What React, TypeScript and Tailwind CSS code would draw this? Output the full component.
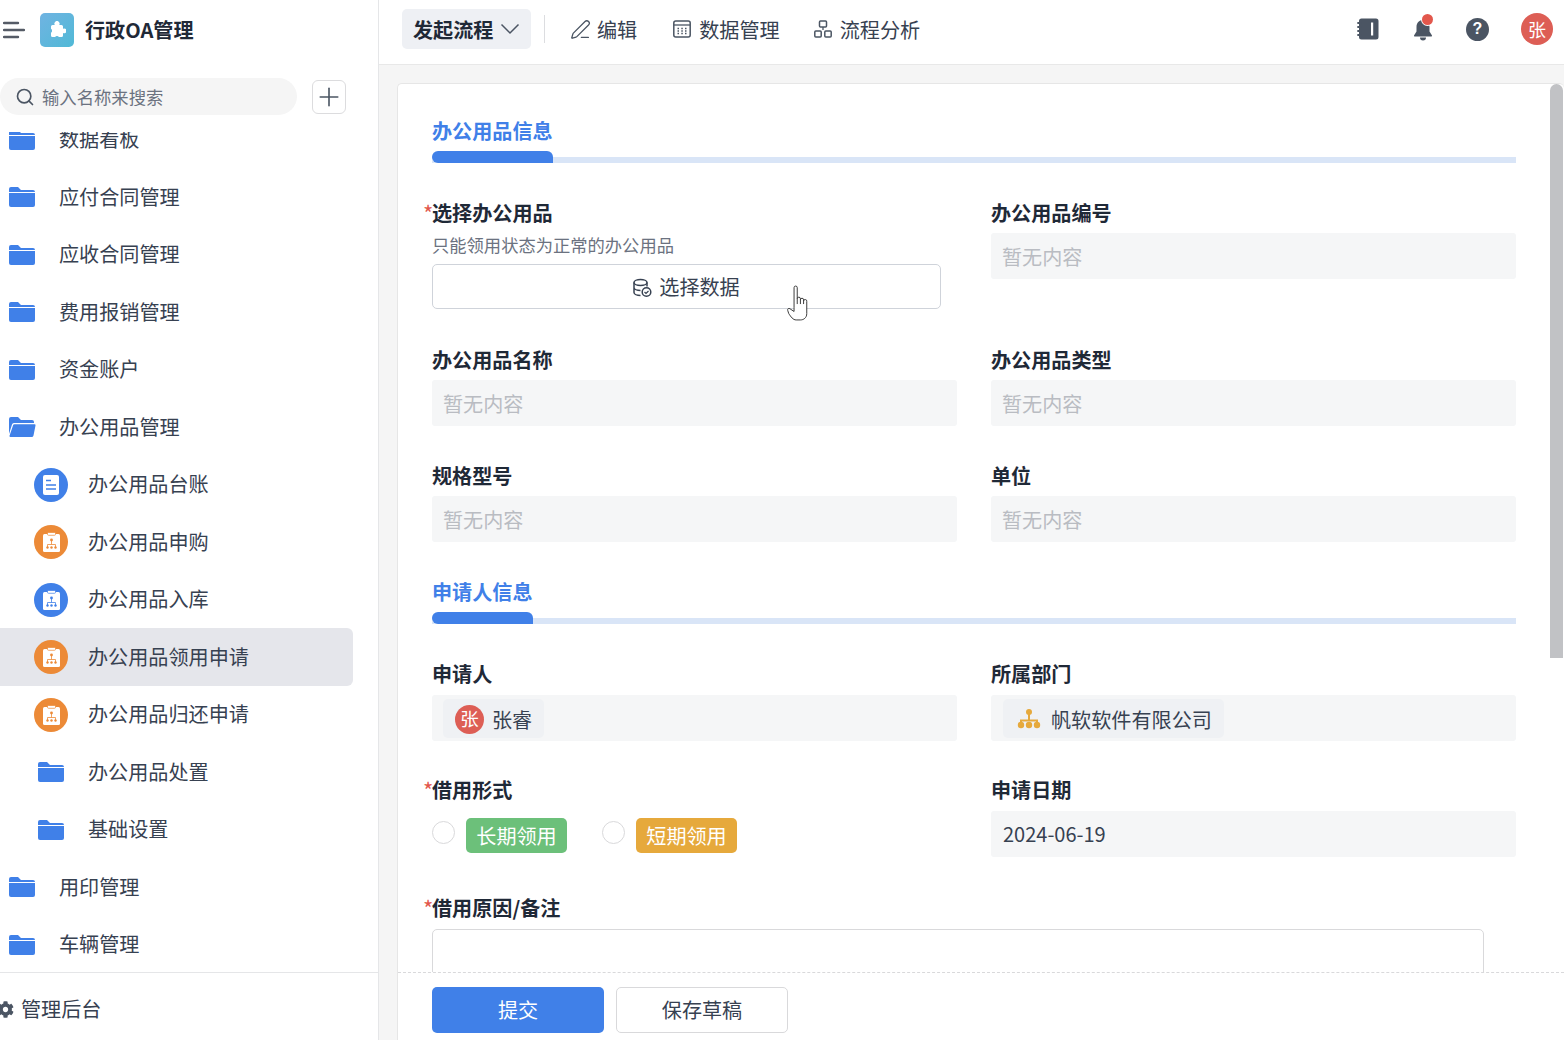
import React from 'react';
import { Search, Plus, PenLine } from 'lucide-react';
import { FaCog } from 'react-icons/fa';

function Folder({ open = false }: { open?: boolean }) {
  if (open) {
    return (
      <svg width="28" height="22" viewBox="0 0 28 22" className="shrink-0">
        <path d="M1 3a2 2 0 0 1 2-2h7l3 3h11a2 2 0 0 1 2 2v1H6a2 2 0 0 0-2 1.5L1 18z" fill="#4080e8" />
        <path d="M5 9.500A1.500 1.500 0 0 1 6.500 8.300h20A1 1 0 0 1 27.500 9.500L25.500 19.500a2 2 0 0 1-2 1.500H2.500a1 1 0 0 1-1-1.200z" fill="#4080e8" />
      </svg>
    );
  }
  return (
    <svg width="28" height="22" viewBox="0 0 28 22" className="shrink-0">
      <path d="M1 3a2 2 0 0 1 2-2h7l3 3h12a2 2 0 0 1 2 2H1z" fill="#4080e8" />
      <path d="M1 7h26v12a2 2 0 0 1-2 2H3a2 2 0 0 1-2-2z" fill="#4080e8" />
    </svg>
  );
}

function AppIcon({ color, doc = false }: { color: string; doc?: boolean }) {
  return (
    <span className="flex h-[34px] w-[34px] shrink-0 items-center justify-center rounded-full" style={{ backgroundColor: color }}>
      {doc ? (
        <svg width="16" height="20" viewBox="0 0 16 20">
          <rect x="0" y="0" width="16" height="20" rx="2" fill="#fff" />
          <path d="M3 5.500h5M3 10h10M3 14h10" stroke={color} strokeWidth="1.300" />
        </svg>
      ) : (
        <svg width="17" height="20" viewBox="0 0 17 20">
          <rect x="0" y="2" width="17" height="18" rx="1.500" fill="#fff" />
          <rect x="4.500" y="0.500" width="8" height="2.800" rx="1" fill="#fff" stroke={color} strokeWidth="0.700" />
          <circle cx="8.500" cy="8" r="1.400" fill={color} />
          <path d="M8.500 9v3.500M4.500 15v-2.500h8V15" stroke={color} strokeWidth="0.800" fill="none" />
          <circle cx="4.500" cy="15.500" r="1.200" fill={color} />
          <circle cx="8.500" cy="15.500" r="1.200" fill={color} />
          <circle cx="12.500" cy="15.500" r="1.200" fill={color} />
        </svg>
      )}
    </span>
  );
}

const BLUE = '#4080e8';
const ORANGE = '#ec8a37';

function TopRow({ label, open = false }: { label: string; open?: boolean }) {
  return (
    <div className="flex h-[57.5px] items-center pl-[8px]">
      <Folder open={open} />
      <span className="ml-[23px]">{label}</span>
    </div>
  );
}

function SubRow({ label, icon, active = false }: { label: string; icon: React.ReactNode; active?: boolean }) {
  return (
    <div className={`flex h-[57.5px] w-[353px] items-center rounded-r-md ${active ? 'bg-[#e5e6eb]' : ''}`}>
      <span className="ml-[34px] flex w-[34px] shrink-0 items-center justify-center">{icon}</span>
      <span className="ml-[20px]">{label}</span>
    </div>
  );
}

function Label({ text, required = false }: { text: string; required?: boolean }) {
  return (
    <div className="relative h-[28px] text-[20.12px] font-bold leading-[27px] text-[#1f2937]">
      {required && <span className="absolute left-[-9px] top-[-1px] text-[22px] font-normal leading-[28px] text-[#e2574c]">*</span>}
      {text}
    </div>
  );
}

function EmptyBox({ className = '' }: { className?: string }) {
  return (
    <div className={`flex h-[46px] items-center rounded-[3px] bg-[#f5f6f7] px-[11px] pt-[2px] text-[#b9bcc2] ${className}`}>暂无内容</div>
  );
}

function SectionTitle({ text, barWidth }: { text: string; barWidth: string }) {
  return (
    <div>
      <div className="h-[28px] font-bold leading-[27px] text-[#4080e8]">{text}</div>
      <div className="relative mt-[6px] flex h-[12px] items-end">
        <div className="h-[6px] w-full bg-[#d9e5f7]" />
        <div className={`absolute bottom-0 left-0 h-[12px] rounded-l-[10px] rounded-tr-[10px] bg-[#4080e8] ${barWidth}`} />
      </div>
    </div>
  );
}

export default function App() {
  return (
    <div className="flex h-screen w-full overflow-hidden bg-white text-[20.12px] text-[#374151] font-['Noto_Sans_CJK_SC','Noto_Sans',sans-serif]">
      <aside className="flex w-[379px] shrink-0 flex-col border-r border-[#e5e6e8] bg-white">
        <div className="flex h-[60px] shrink-0 items-center pl-[3px]">
          <svg width="22" height="18" viewBox="0 0 22 18" className="shrink-0">
            <path d="M1 2h14M1 9h20M1 16h14" stroke="#555b66" strokeWidth="2.400" strokeLinecap="round" />
          </svg>
          <span className="ml-[15px] flex h-[34px] w-[34px] items-center justify-center rounded-[5px] bg-gradient-to-br from-[#6fb3e2] to-[#4fb9d6]">
            <svg width="18" height="18" viewBox="0 0 18 18">
              <path d="M3 5.500a1.500 1.500 0 0 1 1.500-1.500h2.300a2.600 2.600 0 1 1 4.400 0h2.300a1.500 1.500 0 0 1 1.500 1.500v2.300a2.400 2.400 0 1 1 0 4.200v2.500a1.500 1.500 0 0 1-1.500 1.500h-2.600a2.300 2.300 0 0 0-3.800 0H4.500A1.500 1.500 0 0 1 3 14.500v-2.700a2.400 2.400 0 0 0 0-4z" fill="#fff" />
            </svg>
          </span>
          <span className="ml-[11px] font-bold text-[#1f2937]">行政OA管理</span>
        </div>
        <div className="mt-[18px] flex h-[37px] shrink-0 items-center">
          <div className="flex h-[37px] w-[297px] items-center rounded-full bg-[#f5f5f5] pl-[15px] text-[17.33px] text-[#6b7280]">
            <Search size={20} className="text-[#4b5563]" strokeWidth={2} />
            <span className="ml-[7px]">输入名称来搜索</span>
          </div>
          <button className="ml-[15px] flex h-[34px] w-[34px] items-center justify-center rounded-[6px] border-[1.500px] border-[#dcdcde] text-[#4b5563]">
            <Plus size={30} strokeWidth={1.300} />
          </button>
        </div>
        <div className="mt-[17px] min-h-0 flex-1 overflow-hidden">
          <div className="mt-[-21.250px]">
            <TopRow label="数据看板" />
            <TopRow label="应付合同管理" />
            <TopRow label="应收合同管理" />
            <TopRow label="费用报销管理" />
            <TopRow label="资金账户" />
            <TopRow label="办公用品管理" open />
            <SubRow label="办公用品台账" icon={<AppIcon color={BLUE} doc />} />
            <SubRow label="办公用品申购" icon={<AppIcon color={ORANGE} />} />
            <SubRow label="办公用品入库" icon={<AppIcon color={BLUE} />} />
            <SubRow label="办公用品领用申请" icon={<AppIcon color={ORANGE} />} active />
            <SubRow label="办公用品归还申请" icon={<AppIcon color={ORANGE} />} />
            <SubRow label="办公用品处置" icon={<Folder />} />
            <SubRow label="基础设置" icon={<Folder />} />
            <TopRow label="用印管理" />
            <TopRow label="车辆管理" />
          </div>
        </div>
        <div className="flex h-[68px] shrink-0 items-center border-t border-[#e5e6e8] pl-[21px] pt-[6px]">
          <span className="relative">
            <FaCog size={17} className="absolute left-[-24px] top-[7px] text-[#4b5563]" />
            管理后台
          </span>
        </div>
      </aside>

      <div className="flex min-w-0 flex-1 flex-col bg-[#f5f5f5]">
        <header className="flex h-[65px] shrink-0 items-center border-b border-[#e8e8e8] bg-white pb-[6px] pl-[23px] pr-[11px]">
          <div className="flex h-[40px] w-[129px] items-center rounded-[5px] bg-[#eef0f4] pl-[11px] font-bold text-[#1f2937]">
            <span className="pt-[2px]">发起流程</span>
            <svg width="20" height="12" viewBox="0 0 20 12" className="ml-[7px]">
              <path d="M1.500 1.500L10 10l8.500-8.500" fill="none" stroke="#4b5563" strokeWidth="1.500" />
            </svg>
          </div>
          <div className="ml-[13px] h-[28px] w-px bg-[#dcdde0]" />
          <div className="ml-[25px] flex items-center">
            <PenLine size={21} strokeWidth={1.500} className="text-[#4b5563]" />
            <span className="ml-[6px] pt-[2px]">编辑</span>
          </div>
          <div className="ml-[36px] flex items-center">
            <svg width="18" height="18" viewBox="0 0 18 18">
              <rect x="0.800" y="1" width="16.400" height="16" rx="2" fill="none" stroke="#4b5563" strokeWidth="1.500" />
              <path d="M1 5h16" stroke="#4b5563" strokeWidth="1.300" />
              <path d="M4.500 8.500h1.500M8.300 8.500h1.500M12 8.500h1.500M4.500 11h1.500M8.300 11h1.500M12 11h1.500M4.500 13.500h1.500M8.300 13.500h1.500M12 13.500h1.500" stroke="#4b5563" strokeWidth="1.500" />
            </svg>
            <span className="ml-[8px] pt-[2px]">数据管理</span>
          </div>
          <div className="ml-[34px] flex items-center">
            <svg width="18" height="18" viewBox="0 0 18 18">
              <rect x="5.500" y="1" width="7" height="6" rx="1" fill="none" stroke="#4b5563" strokeWidth="1.500" />
              <path d="M9 7v3" stroke="#4b5563" strokeWidth="1.300" />
              <rect x="0.800" y="11" width="6.400" height="6" rx="1" fill="none" stroke="#4b5563" strokeWidth="1.500" />
              <rect x="10.800" y="11" width="6.400" height="6" rx="1" fill="none" stroke="#4b5563" strokeWidth="1.500" />
            </svg>
            <span className="ml-[8px] pt-[2px]">流程分析</span>
          </div>
          <div className="ml-auto flex items-center">
            <svg width="22" height="22" viewBox="0 0 22 22">
              <path d="M2 3a2.500 2.500 0 0 1 2.500-2.500h14.500a2.500 2.500 0 0 1 2.500 2.500v16a2.500 2.500 0 0 1-2.500 2.500H4.500A2.500 2.500 0 0 1 2 19z" fill="#4b5563" />
              <rect x="14" y="4.500" width="2.200" height="13" fill="#fff" />
              <path d="M1 5h3M1 9h3M1 13h3M1 17h3" stroke="#4b5563" strokeWidth="1.800" strokeLinecap="round" />
            </svg>
            <span className="relative ml-[33px] flex h-[24px] w-[22px] items-center justify-center">
              <svg width="20" height="23" viewBox="0 0 20 23">
                <path d="M10 2c-4 0-6.500 3-6.500 7v4.500L1 17.500a.8.8 0 0 0 .7 1h16.600a.8.8 0 0 0 .7-1l-2.500-4V9c0-4-2.500-7-6.500-7z" fill="#4b5563" />
                <path d="M7 19.500a3 3 0 0 0 6 0z" fill="#4b5563" />
              </svg>
              <span className="absolute right-[1px] top-[-3px] h-[11px] w-[11px] rounded-full bg-[#e2574c] ring-1 ring-white" />
            </span>
            <span className="ml-[32px] flex h-[23px] w-[23px] items-center justify-center rounded-full bg-[#4b5563] text-[16px] font-bold leading-none text-white font-['Liberation_Sans',sans-serif]">?</span>
            <span className="ml-[32px] flex h-[32px] w-[32px] items-center justify-center rounded-full bg-[#dd5e55] text-[18px] text-white">张</span>
          </div>
        </header>

        <main className="min-h-0 flex-1 pl-[18px] pt-[18px]">
          <div className="relative flex h-full flex-col overflow-hidden rounded-t-[5px] border border-b-0 border-r-0 border-[#e6e6e6] bg-white">
            <div className="min-h-0 flex-1 overflow-hidden pl-[34px] pr-[48px] pt-[33px]">
              <SectionTitle text="办公用品信息" barWidth="w-[121px]" />

              <div className="mt-[36px] grid grid-cols-2 gap-x-[34px]">
                <div>
                  <Label text="选择办公用品" required />
                  <div className="mt-[6px] h-[25px] text-[17.3px] leading-[24px] text-[#6b7280]">只能领用状态为正常的办公用品</div>
                  <div className="mt-[6px] flex h-[45px] w-[509px] items-center justify-center rounded-[5px] border border-[#cfd3da] pr-[1px] pt-[2px]">
                    <svg width="20" height="20" viewBox="0 0 20 20" className="mr-[7px]">
                      <ellipse cx="8.500" cy="4.500" rx="6.500" ry="3" fill="none" stroke="#374151" strokeWidth="1.500" />
                      <path d="M2 4.500v10c0 1.700 3 3 6.500 3M2 9.500c0 1.700 3 3 6.500 3M15 4.500v4" fill="none" stroke="#374151" strokeWidth="1.500" />
                      <circle cx="14.500" cy="14" r="4.300" fill="#fff" stroke="#374151" strokeWidth="1.500" />
                      <path d="M12.500 14l1.500 1.500 2.500-2.500" fill="none" stroke="#374151" strokeWidth="1.200" />
                    </svg>
                    选择数据
                  </div>
                </div>
                <div>
                  <Label text="办公用品编号" />
                  <EmptyBox className="mt-[6px]" />
                </div>
              </div>

              <div className="mt-[37px] grid grid-cols-2 gap-x-[34px]">
                <div>
                  <Label text="办公用品名称" />
                  <EmptyBox className="mt-[6px]" />
                </div>
                <div>
                  <Label text="办公用品类型" />
                  <EmptyBox className="mt-[6px]" />
                </div>
              </div>

              <div className="mt-[36px] grid grid-cols-2 gap-x-[34px]">
                <div>
                  <Label text="规格型号" />
                  <EmptyBox className="mt-[6px]" />
                </div>
                <div>
                  <Label text="单位" />
                  <EmptyBox className="mt-[6px]" />
                </div>
              </div>

              <div className="mt-[36px]">
                <SectionTitle text="申请人信息" barWidth="w-[101px]" />
              </div>

              <div className="mt-[36px] grid grid-cols-2 gap-x-[34px]">
                <div>
                  <Label text="申请人" />
                  <div className="mt-[7px] flex h-[46px] items-center rounded-[3px] bg-[#f5f6f7] pl-[11px]">
                    <div className="flex h-[39px] w-[101px] items-center rounded-[5px] bg-[#eff1f4] pl-[12px] pt-[2px]">
                      <span className="flex h-[29px] w-[29px] items-center justify-center rounded-full bg-[#dd5e55] text-[18.5px] text-white">张</span>
                      <span className="ml-[8px] pt-[2px]">张睿</span>
                    </div>
                  </div>
                </div>
                <div>
                  <Label text="所属部门" />
                  <div className="mt-[7px] flex h-[46px] items-center rounded-[3px] bg-[#f5f6f7] pl-[12px]">
                    <div className="flex h-[39px] w-[221px] items-center rounded-[5px] bg-[#eff1f4] pl-[14px] pt-[2px]">
                      <svg width="24" height="22" viewBox="0 0 24 22">
                        <circle cx="12" cy="4" r="3" fill="#e6a93c" />
                        <path d="M12 6v6M4 17v-4.500h16V17" stroke="#e6a93c" strokeWidth="2" fill="none" />
                        <circle cx="4" cy="17" r="3.200" fill="#e6a93c" />
                        <circle cx="12" cy="17" r="3.200" fill="#e6a93c" />
                        <circle cx="20" cy="17" r="3.200" fill="#e6a93c" />
                      </svg>
                      <span className="ml-[10px] pt-[2px]">帆软软件有限公司</span>
                    </div>
                  </div>
                </div>
              </div>

              <div className="mt-[35px] grid grid-cols-2 gap-x-[34px]">
                <div>
                  <Label text="借用形式" required />
                  <div className="mt-[7px] flex h-[46px] items-center pt-[2px]">
                    <span className="mt-[-6px] h-[23px] w-[23px] rounded-full border border-[#d9d9db]" />
                    <span className="ml-[11px] flex h-[35px] w-[101px] items-center justify-center rounded-[5px] bg-[#6cc07a] pt-[2px] text-white">长期领用</span>
                    <span className="ml-[35px] mt-[-6px] h-[23px] w-[23px] rounded-full border border-[#d9d9db]" />
                    <span className="ml-[11px] flex h-[35px] w-[101px] items-center justify-center rounded-[5px] bg-[#e6a93c] pt-[2px] text-white">短期领用</span>
                  </div>
                </div>
                <div>
                  <Label text="申请日期" />
                  <div className="mt-[7px] flex h-[46px] items-center rounded-[3px] bg-[#f5f6f7] px-[12px] text-[20px]">2024-06-19</div>
                </div>
              </div>

              <div className="mt-[37px]">
                <Label text="借用原因/备注" required />
                <div className="mt-[7px] h-[120px] w-[1052px] rounded-[5px] border border-[#d9d9db]" />
              </div>
            </div>

            <div className="flex h-[68px] shrink-0 items-start gap-[12px] border-t border-dashed border-[#d9d9db] bg-white pl-[34px] pt-[14px]">
              <button className="flex h-[46px] w-[172px] items-center justify-center rounded-[5px] bg-[#4080e8] text-white">提交</button>
              <button className="flex h-[46px] w-[172px] items-center justify-center rounded-[5px] border border-[#d9d9db] bg-white">保存草稿</button>
            </div>

            <div className="absolute right-[1px] top-0 h-[574px] w-[13px] rounded-t-full rounded-b-[3px] bg-[#c1c2c5]" />
            <svg width="25" height="36" viewBox="0 0 20.500 34" className="absolute left-[387px] top-[201px]">
              <path d="M7 21V2.500a1.500 1.500 0 0 1 3 0V13a1.500 1.500 0 0 1 3 0v1a1.500 1.500 0 0 1 3 0v1a1.500 1.500 0 0 1 3 0.500V27c0 4-3 6-6 6H9c-3 0-5-3-7-6l-1-3c-.5-1.500 1-2.500 2.200-1.500L7 25z" fill="#fff" stroke="#333" strokeWidth="0.900" strokeLinejoin="round" />
              <path d="M10 13v5M13 14v4M16 15v3" stroke="#333" strokeWidth="0.900" />
            </svg>
          </div>
        </main>
      </div>
    </div>
  );
}
